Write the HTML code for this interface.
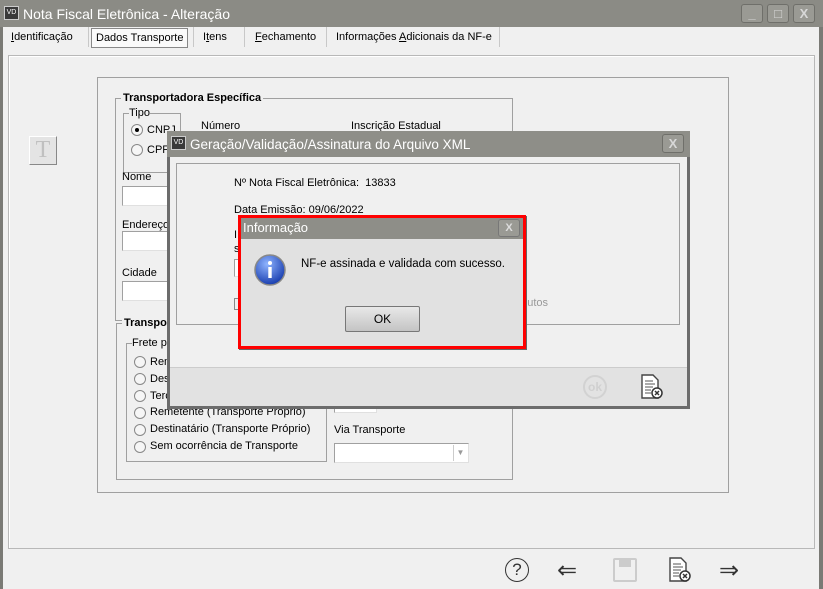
<!DOCTYPE html>
<html><head><meta charset="utf-8"><style>
*{margin:0;padding:0;box-sizing:border-box}
body{width:823px;height:589px;overflow:hidden;background:#f0f0f0;font-family:"Liberation Sans",sans-serif;font-size:11px;color:#000;position:relative}
.a{position:absolute}
.t{position:absolute;white-space:nowrap}
.fr{position:absolute;border:1px solid #a0a0a0}
.in{position:absolute;background:#fff;border:1px solid #a0a0a0;border-right-color:#e0e0e0;border-bottom-color:#e0e0e0}
.rd{position:absolute;width:12px;height:12px;border-radius:50%;border:1px solid #888;background:#f6f6f6}
.wb{position:absolute;top:4px;width:22px;height:19px;border:1px solid #6f6f6a;border-radius:3px;background:#9a9a94;color:#d8d8d8;font-weight:bold;text-align:center;line-height:17px;font-size:13px}
</style></head><body>
<div class="a" style="left:0;top:0;width:823px;height:27px;background:#8b8b85"></div>
<div class="a" style="left:0;top:27px;width:3px;height:562px;background:#7a7a75"></div>
<div class="a" style="left:819px;top:27px;width:4px;height:562px;background:#7a7a75"></div>
<div class="a" style="left:4px;top:6px;width:15px;height:14px;background:#3a3a3a;border:1px solid #ccc;color:#fff;font-size:7px;line-height:12px;text-align:center">VD</div>
<div class="t" style="left:23px;top:6px;font-size:14px;color:#fff">Nota Fiscal Eletrônica - Alteração</div>
<div class="wb" style="left:741px">_</div>
<div class="wb" style="left:767px">□</div>
<div class="wb" style="left:793px">X</div>
<div class="t" style="left:11px;top:31px"><u>I</u>dentificação</div>
<div class="a" style="left:88px;top:27px;width:1px;height:20px;background:#c8c8c8"></div>
<div class="a" style="left:91px;top:28px;width:97px;height:20px;border:1px solid #888;background:#fafafa"></div>
<div class="t" style="left:96px;top:32px">Dados Transporte</div>
<div class="a" style="left:193px;top:27px;width:1px;height:20px;background:#c8c8c8"></div>
<div class="t" style="left:203px;top:31px">I<u>t</u>ens</div>
<div class="a" style="left:244px;top:27px;width:1px;height:20px;background:#c8c8c8"></div>
<div class="t" style="left:255px;top:31px"><u>F</u>echamento</div>
<div class="a" style="left:326px;top:27px;width:1px;height:20px;background:#c8c8c8"></div>
<div class="t" style="left:336px;top:31px">Informações <u>A</u>dicionais da NF-e</div>
<div class="a" style="left:499px;top:27px;width:1px;height:20px;background:#c8c8c8"></div>
<div class="fr" style="left:8px;top:55px;width:807px;height:494px;border-color:#b8b8b8;box-shadow:inset 1px 1px 0 #fff"></div>
<div class="a" style="left:29px;top:136px;width:28px;height:29px;background:#e4e4e4;border:1px solid #fff;border-right-color:#888;border-bottom-color:#888;color:#c0c0c0;font-family:'Liberation Serif',serif;font-size:24px;text-align:center;line-height:26px">T</div>
<div class="fr" style="left:97px;top:77px;width:632px;height:416px"></div>
<div class="fr" style="left:115px;top:98px;width:398px;height:223px"></div>
<div class="t" style="left:121px;top:92px;font-weight:bold;background:#f0f0f0;padding:0 2px">Transportadora Específica</div>
<div class="fr" style="left:123px;top:113px;width:58px;height:60px"></div>
<div class="t" style="left:129px;top:107px;background:#f0f0f0">Tipo</div>
<div class="rd" style="left:131px;top:124px"></div><div class="a" style="left:135px;top:128px;width:4px;height:4px;background:#000;border-radius:50%"></div>
<div class="t" style="left:147px;top:124px">CNPJ</div>
<div class="rd" style="left:131px;top:144px"></div>
<div class="t" style="left:147px;top:144px">CPF</div>
<div class="t" style="left:201px;top:120px">Número</div>
<div class="t" style="left:351px;top:120px">Inscrição Estadual</div>
<div class="t" style="left:122px;top:171px">Nome</div>
<div class="in" style="left:122px;top:186px;width:60px;height:20px"></div>
<div class="t" style="left:122px;top:219px">Endereço</div>
<div class="in" style="left:122px;top:231px;width:60px;height:20px"></div>
<div class="t" style="left:122px;top:267px">Cidade</div>
<div class="in" style="left:122px;top:281px;width:60px;height:20px"></div>
<div class="fr" style="left:116px;top:323px;width:397px;height:157px"></div>
<div class="t" style="left:122px;top:317px;font-weight:bold;background:#f0f0f0;padding:0 2px">Transporte</div>
<div class="fr" style="left:126px;top:343px;width:201px;height:119px"></div>
<div class="t" style="left:132px;top:337px;background:#f0f0f0">Frete por conta</div>
<div class="rd" style="left:134px;top:356px"></div><div class="t" style="left:150px;top:356px">Remetente</div>
<div class="rd" style="left:134px;top:373px"></div><div class="t" style="left:150px;top:373px">Destinatário</div>
<div class="rd" style="left:134px;top:390px"></div><div class="t" style="left:150px;top:390px">Terceiros</div>
<div class="rd" style="left:134px;top:407px"></div><div class="t" style="left:150px;top:406px">Remetente (Transporte Próprio)</div>
<div class="rd" style="left:134px;top:424px"></div><div class="t" style="left:150px;top:423px">Destinatário (Transporte Próprio)</div>
<div class="rd" style="left:134px;top:441px"></div><div class="t" style="left:150px;top:440px">Sem ocorrência de Transporte</div>
<div class="in" style="left:334px;top:398px;width:43px;height:15px"></div>
<div class="t" style="left:334px;top:424px">Via Transporte</div>
<div class="in" style="left:334px;top:443px;width:135px;height:20px"></div>
<div class="a" style="left:453px;top:445px;width:14px;height:16px;border-left:1px solid #ccc;color:#999;font-size:8px;text-align:center;line-height:16px">▼</div>
<div class="a" style="left:167px;top:131px;width:523px;height:278px;background:#f0f0f0;border:3px solid #6c6c6c;border-top:0"></div>
<div class="a" style="left:167px;top:131px;width:523px;height:26px;background:#8e8e88"></div>
<div class="a" style="left:171px;top:136px;width:15px;height:14px;background:#3a3a3a;border:1px solid #ccc;color:#fff;font-size:7px;line-height:12px;text-align:center">VD</div>
<div class="t" style="left:190px;top:137px;font-size:13.5px;color:#fff">Geração/Validação/Assinatura do Arquivo XML</div>
<div class="wb" style="left:662px;top:134px;width:22px">X</div>
<div class="fr" style="left:176px;top:163px;width:504px;height:162px"></div>
<div class="t" style="left:234px;top:177px">Nº Nota Fiscal Eletrônica:&nbsp; 13833</div>
<div class="t" style="left:234px;top:204px">Data Emissão: 09/06/2022</div>
<div class="t" style="left:234px;top:229px">I</div>
<div class="t" style="left:234px;top:243px">s</div>
<div class="in" style="left:234px;top:259px;width:10px;height:18px"></div>
<div class="a" style="left:234px;top:298px;width:10px;height:12px;border:1px solid #888"></div>
<div class="t" style="left:515px;top:297px;color:#999">odutos</div>
<div class="a" style="left:170px;top:367px;width:517px;height:39px;background:#e2e2e2;border-top:1px solid #ccc"></div>
<div class="a" style="left:583px;top:375px;width:24px;height:24px;border:2px solid #d2d2d2;border-radius:50%;color:#d0d0d0;font-weight:bold;font-size:12px;text-align:center;line-height:20px">ok</div>
<svg class="a" style="left:640px;top:374px" width="24" height="26" viewBox="0 0 24 26"><path d="M2 1h11l5 5v18H2z" fill="#fff" stroke="#444" stroke-width="1.4"/><path d="M5 7h8M5 10h10M5 13h8M5 16h6M5 19h6" stroke="#555"/><circle cx="17" cy="19" r="5" fill="#fff" stroke="#333" stroke-width="1.5"/><path d="M15 17l4 4M19 17l-4 4" stroke="#333" stroke-width="1.5"/></svg>
<div class="a" style="left:238px;top:215px;width:288px;height:134px;background:#e1e1e1;border:3px solid #f00;box-shadow:1px 1px 0 #666"></div>
<div class="a" style="left:241px;top:218px;width:282px;height:21px;background:#8e8e88"></div>
<div class="t" style="left:243px;top:220px;font-size:13px;color:#fff">Informação</div>
<div class="a" style="left:498px;top:219px;width:22px;height:18px;border:1px solid #777;border-radius:3px;background:#9a9a94;color:#ddd;font-weight:bold;text-align:center;line-height:16px">X</div>
<svg class="a" style="left:254px;top:254px" width="32" height="32" viewBox="0 0 32 32"><defs><radialGradient id="g" cx="40%" cy="30%" r="70%"><stop offset="0" stop-color="#8fb4ff"/><stop offset="1" stop-color="#1a3fb0"/></radialGradient></defs><circle cx="16" cy="16" r="15" fill="url(#g)" stroke="#888" stroke-width="1.5"/><circle cx="16" cy="9" r="2" fill="#fff"/><rect x="14.3" y="13" width="3.4" height="11" fill="#fff"/></svg>
<div class="t" style="left:301px;top:258px;font-size:11.5px">NF-e assinada e validada com sucesso.</div>
<div class="a" style="left:345px;top:306px;width:75px;height:26px;border:1px solid #777;border-radius:2px;background:linear-gradient(#e8e8e8,#c4c4c4);text-align:center;line-height:24px;font-size:12px">OK</div>
<div class="a" style="left:505px;top:558px;width:24px;height:24px;border:1.5px solid #333;border-radius:50%;text-align:center;line-height:21px;font-size:17px;color:#333">?</div>
<div class="t" style="left:557px;top:556px;font-size:24px;color:#333">⇐</div>
<div class="a" style="left:613px;top:558px;width:24px;height:24px;border:2px solid #ccc;border-radius:2px"></div>
<div class="a" style="left:619px;top:560px;width:12px;height:7px;background:#ccc"></div>
<svg class="a" style="left:668px;top:557px" width="24" height="26" viewBox="0 0 24 26"><path d="M2 1h11l5 5v18H2z" fill="#fff" stroke="#444" stroke-width="1.4"/><path d="M5 7h8M5 10h10M5 13h8M5 16h6M5 19h6" stroke="#555"/><circle cx="17" cy="19" r="5" fill="#fff" stroke="#333" stroke-width="1.5"/><path d="M15 17l4 4M19 17l-4 4" stroke="#333" stroke-width="1.5"/></svg>
<div class="t" style="left:719px;top:556px;font-size:24px;color:#333">⇒</div>
</body></html>
